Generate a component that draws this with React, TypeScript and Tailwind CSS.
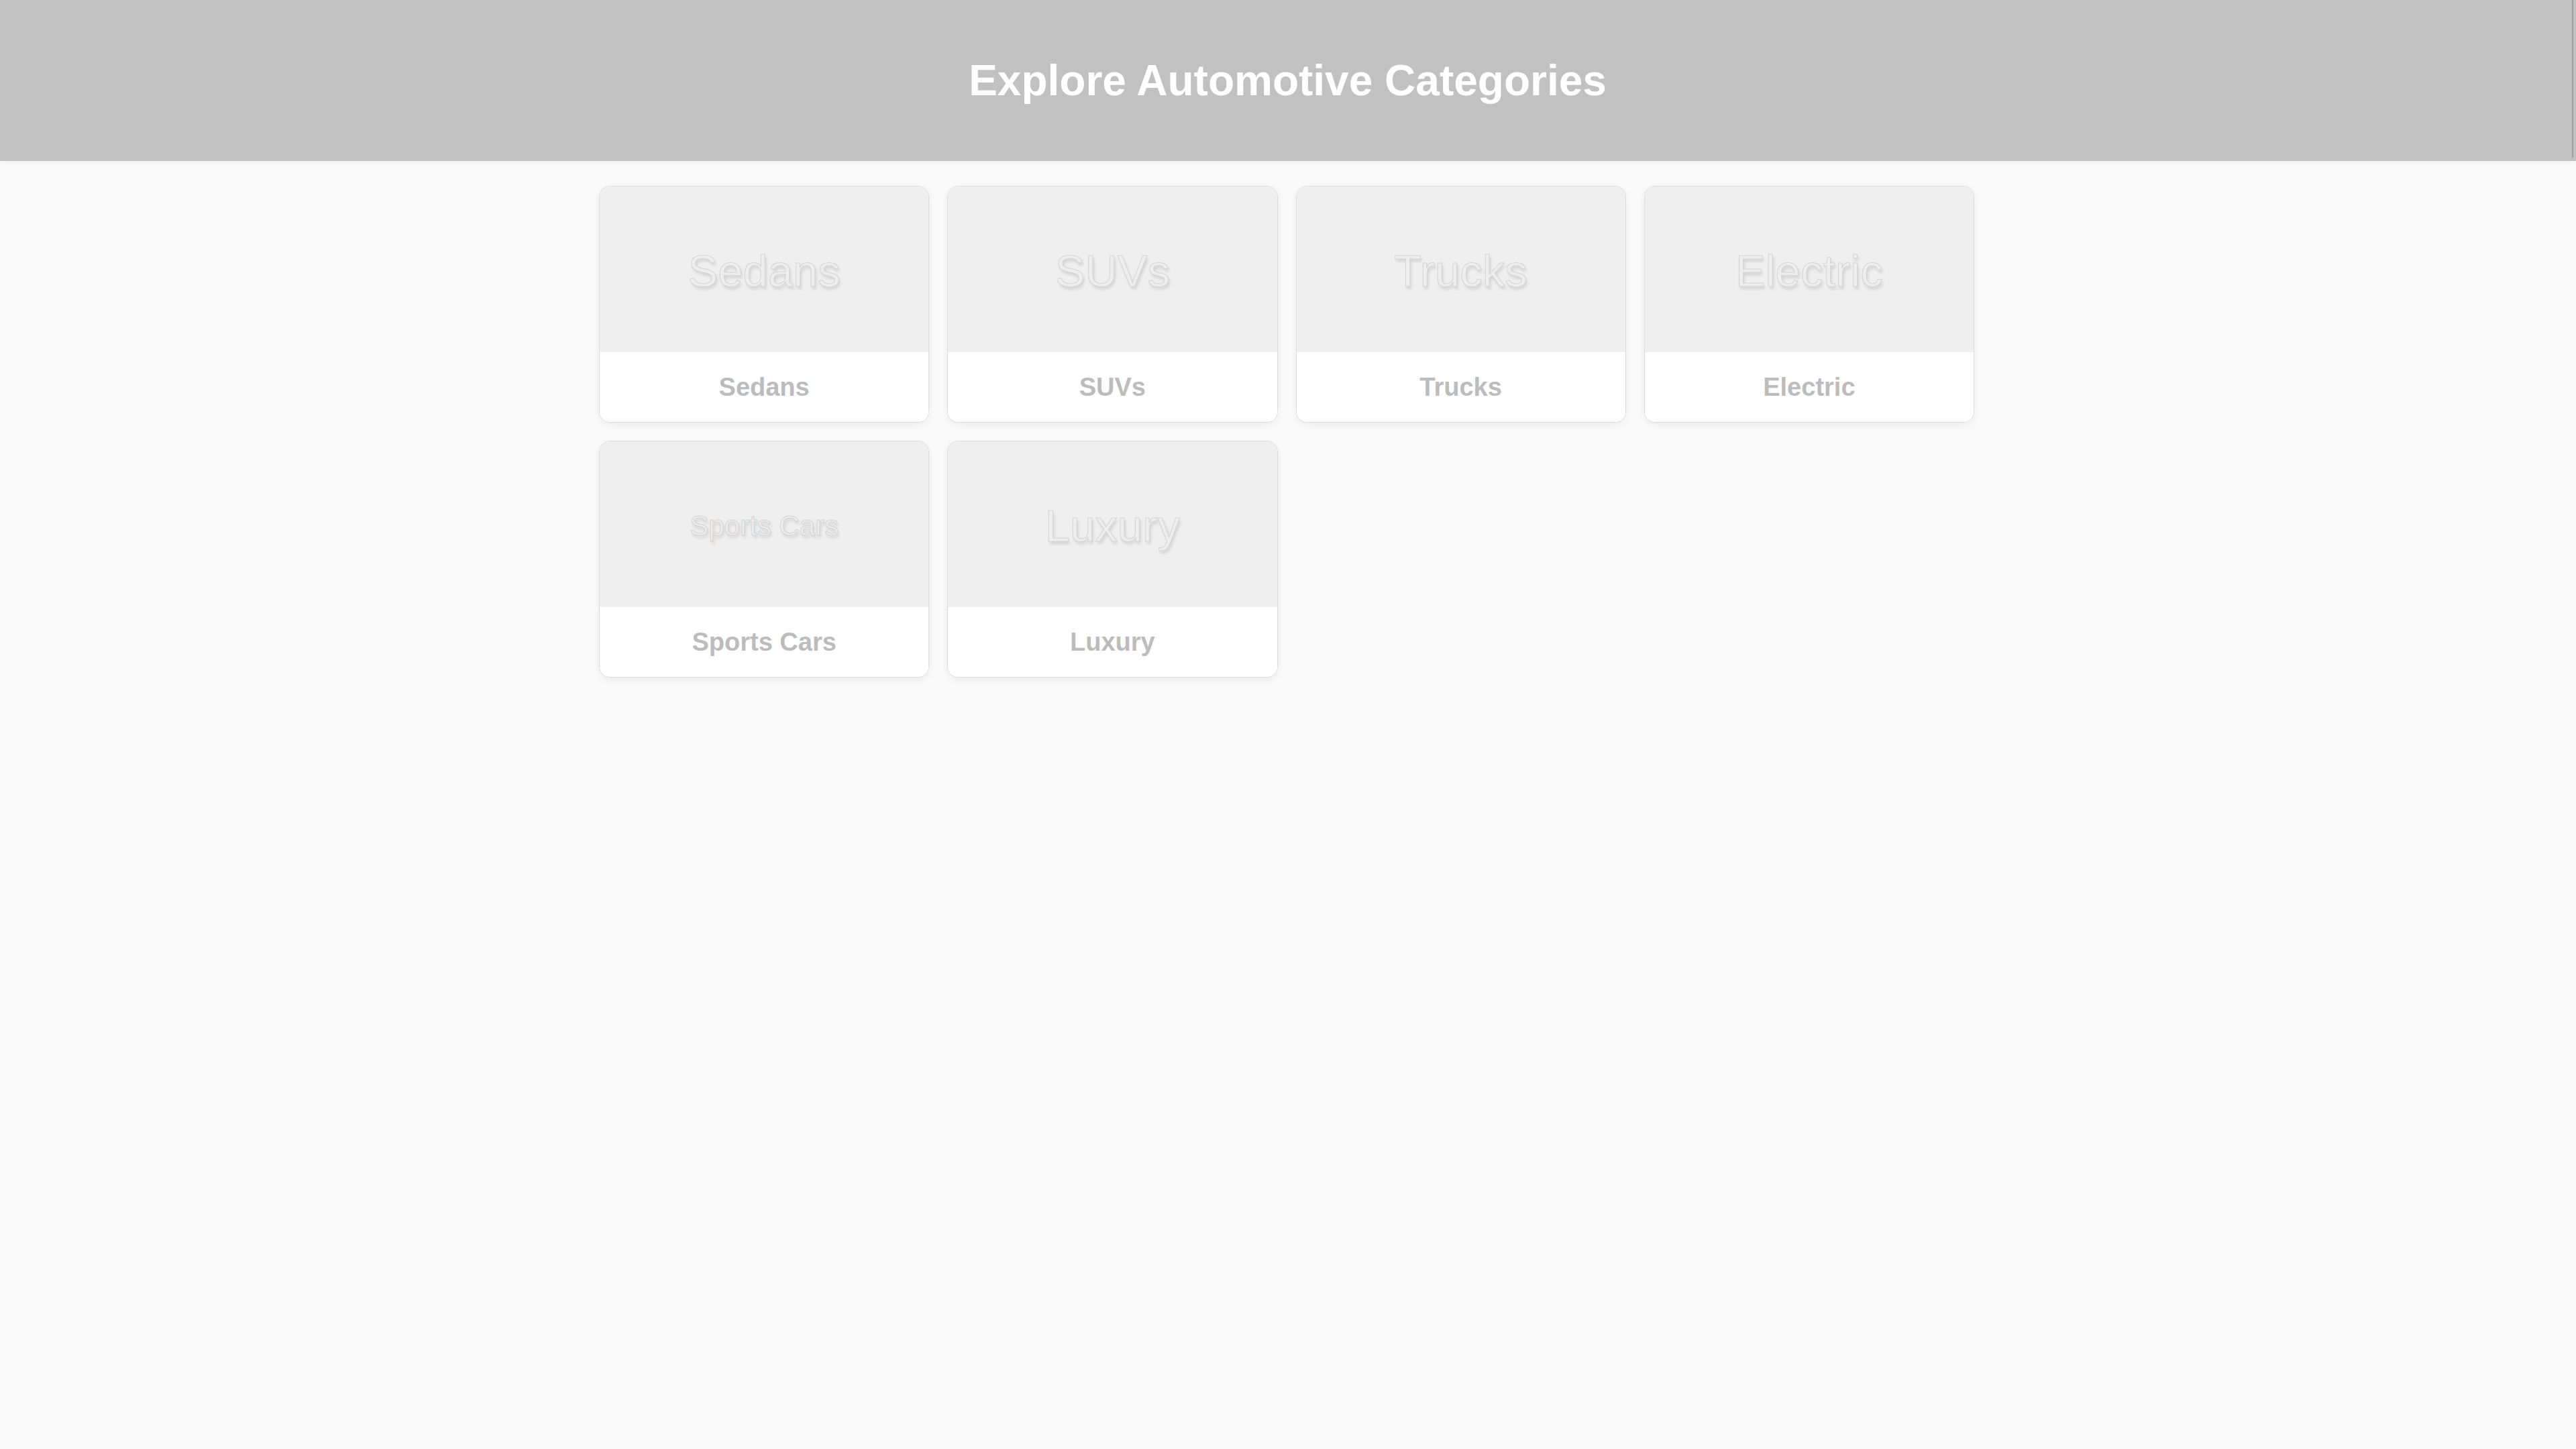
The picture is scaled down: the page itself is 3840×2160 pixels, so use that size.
import React from "react";

const cats: { name: string; small?: boolean }[] = [
  { name: "Sedans" },
  { name: "SUVs" },
  { name: "Trucks" },
  { name: "Electric" },
  { name: "Sports Cars", small: true },
  { name: "Luxury" },
];

function Card({ name, small }: { name: string; small?: boolean }) {
  return (
    <div className="flex flex-col overflow-hidden rounded-[16px] border border-[#dcdcdc] bg-white shadow-[0_4px_12px_rgba(0,0,0,0.06)]">
      <div className="flex h-[247px] items-center justify-center bg-[#efefef] pt-[4px]">
        <span
          className={
            small
              ? "text-[42px] leading-none text-[#eeeeee] [-webkit-text-stroke:1px_#d4d4d4] [text-shadow:2px_4px_4px_rgba(0,0,0,0.12)]"
              : "text-[67px] leading-none text-[#eeeeee] [-webkit-text-stroke:1px_#d4d4d4] [text-shadow:2px_4px_4px_rgba(0,0,0,0.12)]"
          }
        >
          {name}
        </span>
      </div>
      <div className="flex h-[104px] items-center justify-center bg-white">
        <span className="text-[38px] font-bold text-[#bcbcbc]">{name}</span>
      </div>
    </div>
  );
}

export default function App() {
  return (
    <div className="min-h-[2160px] w-full bg-[#fafafa] font-['Liberation_Sans',Arial,sans-serif]">
      <header className="flex h-[240px] w-full bg-[#c1c1c1] shadow-[0_2px_8px_rgba(0,0,0,0.05)]">
        <div className="flex flex-1 items-center justify-center pl-[6px]">
          <h1 className="text-[64px] font-bold leading-none text-white">
            Explore Automotive Categories
          </h1>
        </div>
        <div className="mb-[5px] ml-[1px] w-[2px] bg-[#9e9e9e]" />
        <div className="w-[4px]" />
      </header>
      <main className="pr-[4px] pt-[37px]">
        <div className="mx-auto grid w-[2050px] grid-cols-4 gap-[27px]">
          {cats.map((c) => (
            <Card key={c.name} name={c.name} small={c.small} />
          ))}
        </div>
      </main>
    </div>
  );
}
